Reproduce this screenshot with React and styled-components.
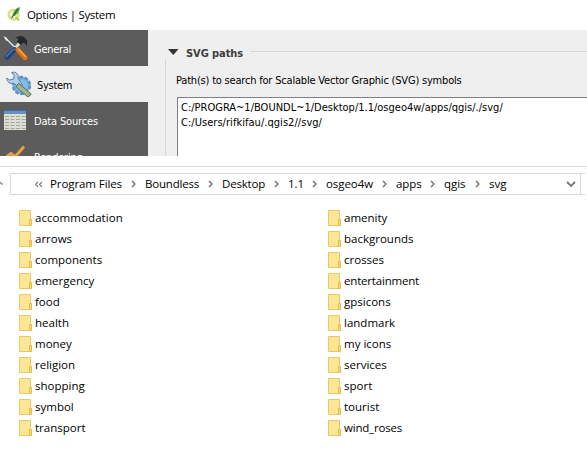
import React from 'react';
import styled, { createGlobalStyle } from 'styled-components';

const Global = createGlobalStyle`
  body { margin: 0; background: #fff; overflow: hidden; }
  * { box-sizing: border-box; }
  svg { display: block; flex: none; }
`;

const Page = styled.div`
  width: 587px;
  height: 453px;
  display: flex;
  flex-direction: column;
  background: #fff;
  color: #000;
  font: 11.5px 'Open Sans', 'Noto Sans', sans-serif;
`;

const Label = styled.span`
  white-space: pre;
  letter-spacing: ${(p) => p.$track || 0}px;
`;

const TitleBar = styled.header`
  height: 30px;
  display: flex;
  align-items: center;
  gap: 6px;
  padding: 0 0 2px 7px;
`;

const Options = styled.section`
  height: 126px;
  display: flex;
  overflow: hidden;
  background: #efefef;
  font: 11px 'DejaVu Sans Condensed', 'DejaVu Sans', sans-serif;
`;

const Sidebar = styled.nav`
  width: 148px;
  flex: none;
  background: #5c5c5c;
`;

const NavItem = styled.div`
  height: 36px;
  display: flex;
  align-items: center;
  gap: 5px;
  padding-left: ${(p) => (p.$active ? 6 : 3)}px;
  background: ${(p) => (p.$active ? '#efefef' : '#5c5c5c')};
  color: ${(p) => (p.$active ? '#000' : '#fff')};
`;

const NavIcon = styled.span`
  width: 26px;
  flex: none;
`;

const NavText = styled(Label)`
  padding-top: 2px;
`;

const Panel = styled.div`
  flex: 1;
  padding: 15px 0 0 17px;
`;

const GroupHead = styled.div`
  height: 14px;
  display: flex;
  align-items: center;
  color: #3d3d3d;
  font-weight: 700;
`;

const GroupTitle = styled(Label)`
  margin: 2px 7px 0 4px;
`;

const Rule = styled.div`
  flex: 1;
  height: 1px;
  margin-bottom: 2px;
  background: #d6d6d6;
`;

const GroupBody = styled.div`
  height: 97px;
  border-left: 1px solid #d6d6d6;
  padding: 14px 0 0 11px;
`;

const Caption = styled.div`
  height: 24px;
  line-height: 16px;
  margin-left: -1px;
`;

const PathList = styled.div`
  height: 70px;
  border: solid #7c8089;
  border-width: 1px 0 0 1px;
  background: #fff;
  padding: 2px 0 0 3px;
  line-height: 15px;
  display: flex;
  flex-direction: column;
`;

const Explorer = styled.section`
  margin-top: 10px;
  border-top: 1px solid #dadada;
`;

const AddressRow = styled.div`
  display: flex;
  height: 22px;
  margin-top: 6px;
  width: 585px;
`;

const UpSlot = styled.div`
  width: 10px;
  padding-top: 8px;
`;

const AddressBar = styled.div`
  width: 571px;
  border: 1px solid #d9d9d9;
  display: flex;
  align-items: center;
  padding: 0 4px 0 23px;
`;

const BarEnd = styled.div`
  flex: 1;
  border: solid #d9d9d9;
  border-width: 1px 0;
`;

const Crumb = styled(Label)`
  width: ${(p) => p.$width}px;
  line-height: 20px;
`;

const Slot = styled.span`
  width: ${(p) => p.$width}px;
  display: flex;
  justify-content: ${(p) => p.$align || 'center'};
`;

const Spacer = styled.span`
  flex: 1;
`;

const Columns = styled.div`
  display: grid;
  grid-template-columns: 309px 1fr;
  padding: 12px 0 0 19px;
`;

const Folders = styled.div`
  display: flex;
  flex-direction: column;
`;

const FolderRow = styled.div`
  height: 21px;
  display: flex;
  align-items: center;
  gap: 3px;
`;

const QgisIcon = () => (
  <svg width="14" height="16" viewBox="0 0 14 16">
    <circle cx="6.5" cy="8.8" r="4.8" fill="#f3f8d2" stroke="#d3e285" strokeWidth="2.6" />
    <path d="M13 1C9 1.7 6.2 5.2 5.6 9.6l1.9.5C9.9 8.4 12.8 5.6 13 1z" fill="#5aa544" />
    <path d="m4.5 12 6.5-9" stroke="#20602a" strokeWidth="1.2" />
    <path d="m8.5 11 3.5 3.4" stroke="#b7d25a" strokeWidth="2.2" />
  </svg>
);

const ToolsIcon = () => (
  <svg width="26" height="26" viewBox="0 0 26 26">
    <path d="m2 2.5 11 11" stroke="#d9dcde" strokeWidth="1.6" />
    <path d="m.5 1.5 2.5.8 1.8 2.6-1.2 1z" fill="#f1f1f1" />
    <path d="m12 13.5 5-6" stroke="#d9d9d6" strokeWidth="3" />
    <path d="M13 3C16 .2 20.5.3 22.5 3.8L24 5.5v5.2l-2.2-2.4-1.5-.8-2.6 2.6-3.9-3.6 1.8-2.3z" fill="#25272a" />
    <path d="m11.5 14.5-7.5 8" stroke="#1b4380" strokeWidth="4.8" strokeLinecap="round" />
    <path d="m10.8 14-7.3 7.5" stroke="#4479b9" strokeWidth="1.5" strokeLinecap="round" />
    <path d="m14.8 14.8 7.4 8" stroke="#e2700f" strokeWidth="4.8" strokeLinecap="round" />
    <path d="m15.4 14 7 7.6" stroke="#ffa342" strokeWidth="1.5" strokeLinecap="round" />
  </svg>
);

const SystemIcon = () => (
  <svg width="26" height="26" viewBox="0 0 26 26">
    <circle cx="15.5" cy="14.5" r="8.4" fill="#78afe0" stroke="#5793cc" strokeWidth="2.6" strokeDasharray="3.8 1.5" />
    <circle cx="15.5" cy="14.5" r="6" fill="#8bbce6" />
    <path d="M.8 7 3.5 9l4-1 .8-3.6L5.5 1.7C9.5 0 13 2.8 12.2 7.5L16.5 14 13 17l-5-4.7C4 13.2.5 10.8.8 7z" fill="#b0cfe8" stroke="#547fa8" strokeWidth="1" />
    <path d="m13 15.5 9 7.7" stroke="#5c7655" strokeWidth="5.2" strokeLinecap="square" />
    <path d="m13 15.5 9 7.7" stroke="#a3ba91" strokeWidth="3.4" strokeLinecap="square" />
  </svg>
);

const TableIcon = () => (
  <svg width="24" height="22" viewBox="0 0 24 22">
    <path d="M1 1h22v20H1z" fill="#dddfd5" />
    <path d="M1 1h22v4H1z" fill="#6791c5" />
    <path d="M1 1.5h22" stroke="#3f6ca6" />
    <path d="M2 7.5h4M2 10.5h4M2 13.5h4M2 16.5h4M2 19.5h4M7.5 7.5h4M7.5 10.5h4M7.5 13.5h4M7.5 16.5h4M7.5 19.5h4M13 7.5h4M13 10.5h4M13 13.5h4M13 16.5h4M13 19.5h4M18.5 7.5h4M18.5 10.5h4M18.5 13.5h4M18.5 16.5h4M18.5 19.5h4" stroke="#a2a79c" />
  </svg>
);

const RenderingIcon = () => (
  <svg width="26" height="26" viewBox="0 0 26 26">
    <path d="m2 15 6-4.5 4 3.5L21 3.5" fill="none" stroke="#e8a040" strokeWidth="3" />
    <path d="M1 21h22" stroke="#bcbcbc" />
  </svg>
);

const FolderIcon = () => (
  <svg width="13" height="16" viewBox="0 0 13 16">
    <path d="M.5.5h11v15H.5z" fill="#fee695" stroke="#e6c96a" />
    <path d="M10.5 9.5h2v6h-2z" fill="#fbdc78" stroke="#e3bd4a" />
  </svg>
);

const Chevron = () => (
  <svg width="5" height="8" viewBox="0 0 5 8">
    <path d="m1 1 3 3-3 3" fill="none" stroke="#777" strokeWidth="1.5" />
  </svg>
);

const NAV = [
  { text: 'General', track: -0.28, Icon: ToolsIcon },
  { text: 'System', track: -0.28, Icon: SystemIcon, active: true },
  { text: 'Data Sources', track: -0.16, Icon: TableIcon },
  { text: 'Rendering', track: -0.2, Icon: RenderingIcon },
];

const CRUMBS = [
  ['Program Files', 72, -0.09],
  ['Boundless', 54, -0.2],
  ['Desktop', 43, -0.2],
  ['1.1', 15, -0.1],
  ['osgeo4w', 47, -0.07],
  ['apps', 25, -0.1],
  ['qgis', 22, -0.05],
  ['svg', 18, 0],
];

const FOLDERS = [
  [['accommodation', 0.07], ['arrows'], ['components'], ['emergency'], ['food'], ['health'], ['money'], ['religion'], ['shopping'], ['symbol'], ['transport']],
  [['amenity'], ['backgrounds'], ['crosses'], ['entertainment', -0.19], ['gpsicons'], ['landmark'], ['my icons'], ['services'], ['sport'], ['tourist'], ['wind_roses', -0.2]],
];

export default function App() {
  return (
    <Page>
      <Global />
      <TitleBar>
        <QgisIcon />
        <Label $track={-0.33}>Options | System</Label>
      </TitleBar>
      <Options>
        <Sidebar>
          {NAV.map(({ text, track, Icon, active }) => (
            <NavItem key={text} $active={active}>
              <NavIcon><Icon /></NavIcon>
              <NavText $track={track}>{text}</NavText>
            </NavItem>
          ))}
        </Sidebar>
        <Panel>
          <GroupHead>
            <svg width="17" height="8" viewBox="0 0 17 8">
              <path d="M3 1h10.5L8.3 7z" fill="#333" />
            </svg>
            <GroupTitle $track={-0.08}>SVG paths</GroupTitle>
            <Rule />
          </GroupHead>
          <GroupBody>
            <Caption>
              <Label $track={-0.197}>Path(s) to search for Scalable Vector Graphic (SVG) symbols</Label>
            </Caption>
            <PathList>
              <Label>C:/PROGRA~1/BOUNDL~1/Desktop/1.1/osgeo4w/apps/qgis/./svg/</Label>
              <Label $track={0.04}>C:/Users/rifkifau/.qgis2//svg/</Label>
            </PathList>
          </GroupBody>
        </Panel>
      </Options>
      <Explorer>
        <AddressRow>
          <UpSlot>
            <svg width="4" height="5" viewBox="0 0 4 5">
              <path d="M0 1.2 2.5 3.5" stroke="#777" strokeWidth="1.3" />
            </svg>
          </UpSlot>
          <AddressBar>
            <Slot $width={16} $align="flex-start">
              <svg width="10" height="7" viewBox="0 0 10 7">
                <path d="M4 1 1.5 3.5 4 6M8 1 5.5 3.5 8 6" fill="none" stroke="#777" strokeWidth="1.1" />
              </svg>
            </Slot>
            {CRUMBS.map(([text, width, track], i) => (
              <React.Fragment key={text}>
                {i > 0 && <Slot $width={23}><Chevron /></Slot>}
                <Crumb $width={width} $track={track}>{text}</Crumb>
              </React.Fragment>
            ))}
            <Spacer />
            <svg width="10" height="7" viewBox="0 0 10 7">
              <path d="m1 1 4 4 4-4" fill="none" stroke="#777" strokeWidth="1.8" />
            </svg>
          </AddressBar>
          <BarEnd />
        </AddressRow>
        <Columns>
          {FOLDERS.map((column, i) => (
            <Folders key={i}>
              {column.map(([text, track]) => (
                <FolderRow key={text}>
                  <FolderIcon />
                  <Label $track={track}>{text}</Label>
                </FolderRow>
              ))}
            </Folders>
          ))}
        </Columns>
      </Explorer>
    </Page>
  );
}
